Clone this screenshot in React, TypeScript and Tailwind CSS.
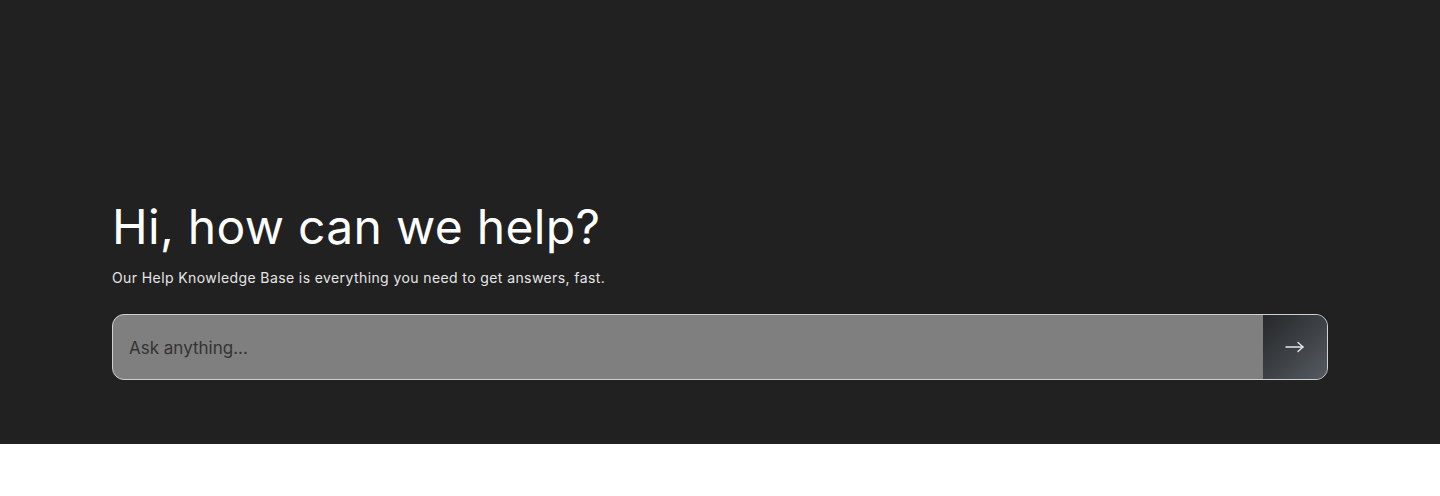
import React from "react";

export default function App() {
  return (
    <div className="min-h-[496px] bg-white" style={{ fontFamily: "Inter, 'Noto Sans', sans-serif" }}>
      <section className="bg-[#212121] h-[444px] flex flex-col justify-end px-[112px] pb-[64px]">
        <h1 className="text-[48px] leading-[48px] font-normal tracking-[0.3px] text-white">Hi, how can we help?</h1>
        <p className="mt-[17px] text-[14px] leading-[20px] tracking-[0.4px] text-[#e6e6e6]">
          Our Help Knowledge Base is everything you need to get answers, fast.
        </p>
        <div className="mt-[26px] flex h-[66px] rounded-[12px] border border-[#d0d0d0] bg-[#7f7f7f] overflow-hidden">
          <input
            className="flex-1 bg-transparent px-[16px] pt-[3px] text-[17px] text-[#2c2c2c] placeholder-[#333333] outline-none"
            placeholder="Ask anything..."
          />
          <button className="w-[64px] flex items-center justify-center bg-gradient-to-br from-[#26282a] to-[#555b62]">
            <svg width="20" height="12" viewBox="0 0 20 12" fill="none" stroke="#e8e8e8" strokeWidth="1.4" strokeLinecap="round" strokeLinejoin="round">
              <path d="M1 6h17" />
              <path d="M13 1.5L18 6l-5 4.5" />
            </svg>
          </button>
        </div>
      </section>
    </div>
  );
}
